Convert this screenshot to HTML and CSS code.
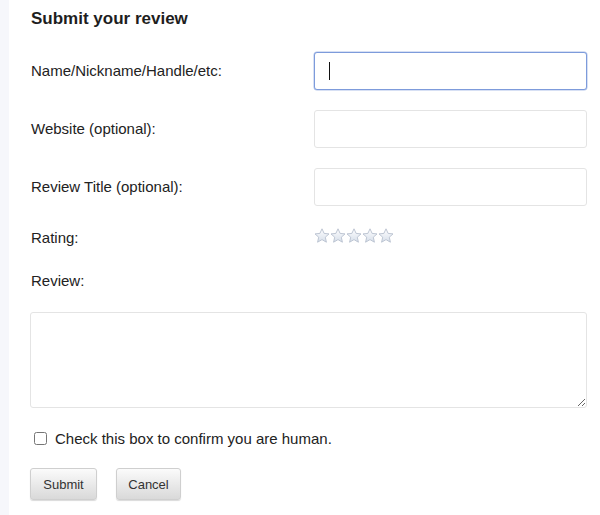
FILE: index.html
```html
<!DOCTYPE html>
<html>
<head>
    <title>Submit your review</title>
    <link rel="stylesheet" href="styles.css">
</head>
<body>
    <div class="sidebar"></div>
    <div class="content">
        <h2>Submit your review</h2>
        <form class="review-form" onsubmit="return false;">
            <div class="row">
                <label for="name">Name/Nickname/Handle/etc:</label>
                <span class="field-wrap">
                    <input type="text" id="name" class="field focused">
                    <span class="caret"></span>
                </span>
            </div>
            <div class="row">
                <label for="website">Website (optional):</label>
                <input type="text" id="website" class="field">
            </div>
            <div class="row">
                <label for="title">Review Title (optional):</label>
                <input type="text" id="title" class="field">
            </div>
            <div class="row row-short">
                <label>Rating:</label>
                <div class="stars">
                    <svg width="81" height="16" viewBox="0 0 81 16">
                        <defs>
                            <linearGradient id="starFill" x1="0" y1="0" x2="0" y2="1">
                                <stop offset="0" stop-color="#ffffff"/>
                                <stop offset="1" stop-color="#d6deea"/>
                            </linearGradient>
                            <path id="star" d="M8 0.8 L10.1 5.4 L15 5.9 L11.3 9.2 L12.4 14.2 L8 11.6 L3.6 14.2 L4.7 9.2 L1 5.9 L5.9 5.4 Z"/>
                        </defs>
                        <use href="#star" x="0" fill="url(#starFill)" stroke="#b7c0ce" stroke-width="0.9"/>
                        <use href="#star" x="16" fill="url(#starFill)" stroke="#b7c0ce" stroke-width="0.9"/>
                        <use href="#star" x="32" fill="url(#starFill)" stroke="#b7c0ce" stroke-width="0.9"/>
                        <use href="#star" x="48" fill="url(#starFill)" stroke="#b7c0ce" stroke-width="0.9"/>
                        <use href="#star" x="64" fill="url(#starFill)" stroke="#b7c0ce" stroke-width="0.9"/>
                    </svg>
                </div>
            </div>
            <div class="row-label">
                <label for="review">Review:</label>
            </div>
            <textarea id="review" class="review-text"></textarea>
            <div class="human">
                <input type="checkbox" id="human">
                <label for="human">Check this box to confirm you are human.</label>
            </div>
            <div class="buttons">
                <button type="submit" class="btn btn-submit">Submit</button>
                <button type="button" class="btn btn-cancel">Cancel</button>
            </div>
        </form>
    </div>
</body>
</html>
```

FILE: styles.css
```css
body {
    margin: 0;
    font-family: "Liberation Sans", Arial, sans-serif;
    font-size: 15px;
    color: #222;
    background-color: #fff;
    display: flex;
    min-height: 515px;
}
.sidebar {
    width: 9px;
    flex-shrink: 0;
    background-color: #f6f7fb;
}
.content {
    padding: 10px 0 0 22px;
    width: 556px;
}
h2 {
    font-size: 17px;
    font-weight: bold;
    line-height: 18px;
    margin: 0 0 24px 0;
    color: #1e1e1e;
}
.row {
    display: grid;
    grid-template-columns: 283px 273px;
    align-items: center;
    margin-bottom: 20px;
}
.row-short {
    height: 24px;
}
.row label,
.row-label label {
    line-height: 22px;
}
.row-label {
    margin-bottom: 20px;
}
.field-wrap {
    position: relative;
    display: block;
    height: 38px;
}
.field {
    box-sizing: border-box;
    display: block;
    height: 38px;
    width: 273px;
    border: 1px solid #e4e4e4;
    border-radius: 3px;
    padding: 0 14px;
    font-family: inherit;
    font-size: 16px;
    outline: none;
}
.field.focused {
    border-color: #7d9bdb;
    box-shadow: 0 0 0 0.5px rgba(125, 155, 219, 0.6);
}
/* text cursor shown in the active field */
.caret {
    position: absolute;
    left: 15px;
    top: 10px;
    width: 1px;
    height: 18px;
    background-color: #111;
}
.stars {
    height: 24px;
    display: flex;
    align-items: flex-start;
    padding-top: 2px;
    box-sizing: border-box;
}
.stars svg {
    display: block;
}
.review-text {
    display: block;
    box-sizing: border-box;
    width: 557px;
    height: 96px;
    margin: 0 0 20px -1px;
    border: 1px solid #e4e4e4;
    border-radius: 3px;
    font-family: inherit;
    font-size: 14px;
    outline: none;
}
.human {
    display: flex;
    align-items: center;
    height: 20px;
    margin-bottom: 20px;
}
.human input {
    margin: 0 8px 0 3px;
    width: 13px;
    height: 13px;
}
.buttons {
    display: flex;
    gap: 19px;
    margin-left: -1px;
}
.btn {
    height: 32px;
    padding: 0;
    font-family: inherit;
    font-size: 13px;
    color: #333;
    border: 1px solid #cfcfcf;
    border-radius: 3px;
    background: linear-gradient(#fbfbfb, #d9d9d9);
    box-shadow: 0 1px 1px rgba(0, 0, 0, 0.15);
    cursor: pointer;
}
.btn-submit {
    width: 67px;
}
.btn-cancel {
    width: 65px;
}
```
